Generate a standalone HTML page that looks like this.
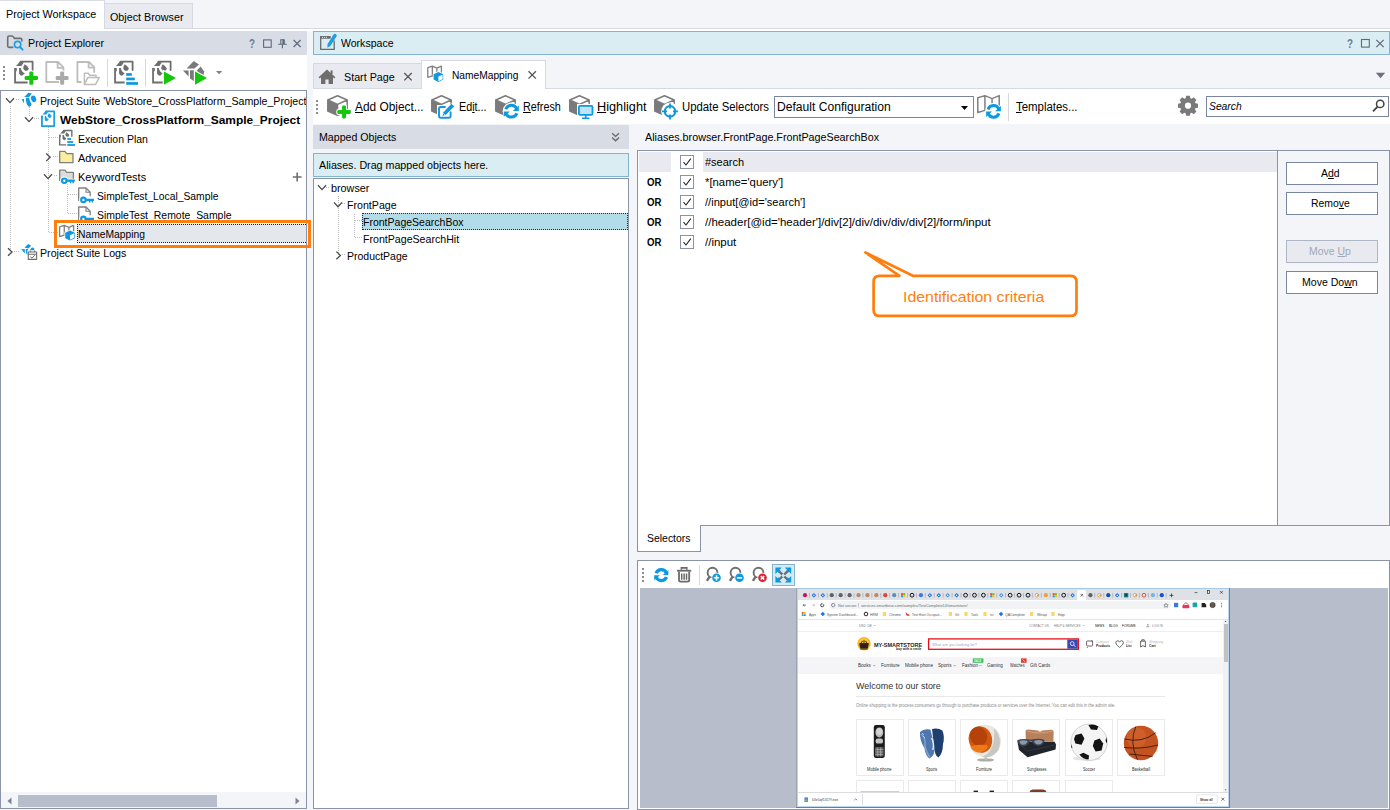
<!DOCTYPE html>
<html><head><meta charset="utf-8"><title>TestComplete - NameMapping</title>
<style>
html,body{margin:0;padding:0}
body{width:1390px;height:810px;overflow:hidden;position:relative;background:#F4F5F8;font-family:"Liberation Sans",sans-serif;color:#000}
.a{position:absolute;display:block}
.t{position:absolute;white-space:pre;line-height:1;transform-origin:0 0;font-family:"Liberation Sans",sans-serif}
u{text-decoration:underline;text-underline-offset:1px}
</style></head><body>
<div class="a " style="left:0px;top:0px;width:104px;height:31px;background:#fff;"></div>
<div class="a " style="left:0px;top:0px;width:105px;height:1px;background:#D9DCE3;"></div>
<div class="a " style="left:104px;top:3px;width:89px;height:26px;background:#E8EAEF;box-shadow:inset 0 0 0 1px #D5D9E1;"></div>
<div class="a " style="left:104px;top:1px;width:1px;height:28px;background:#D5D9E1;"></div>
<div class="a " style="left:104px;top:28px;width:1286px;height:1px;background:#D5D9E1;"></div>
<div class="a " style="left:104px;top:29px;width:1286px;height:2px;background:#fff;"></div>
<span class="t" style="left:6.0px;top:9px;font-size:11px;transform:scaleX(0.9804);">Project Workspace</span>
<span class="t" style="left:110.0px;top:12px;font-size:11px;transform:scaleX(0.9776);">Object Browser</span>
<div class="a " style="left:0px;top:31px;width:307px;height:24px;background:#D8DCE5;"></div>
<span class="t" style="left:28.4px;top:38px;font-size:11px;transform:scaleX(0.9726);">Project Explorer</span>
<div class="a " style="left:0px;top:55px;width:307px;height:35px;background:#fff;"></div>
<div class="a " style="left:0px;top:90px;width:307px;height:719px;background:#fff;box-shadow:inset 0 0 0 1px #8A93A8;"></div>
<div class="a " style="left:1px;top:792px;width:305px;height:16px;background:#F4F5F8;"></div>
<div class="a " style="left:18px;top:795px;width:199px;height:12px;background:#B7BDCB;"></div>
<svg class="a" style="left:7px;top:797px" width="5" height="8" viewBox="0 0 5 8"><path d="M4.5 0.5 L0.5 4 L4.5 7.5Z" fill="#7A849A"/></svg>
<svg class="a" style="left:295px;top:797px" width="5" height="8" viewBox="0 0 5 8"><path d="M0.5 0.5 L4.5 4 L0.5 7.5Z" fill="#7A849A"/></svg>
<div class="a" style="left:10px;top:106px;width:1px;height:146px;background:repeating-linear-gradient(to bottom,#BDBDBD 0 1px,transparent 1px 2px)"></div>
<div class="a" style="left:16px;top:99px;width:4px;height:1px;background:repeating-linear-gradient(to right,#BDBDBD 0 1px,transparent 1px 2px)"></div>
<div class="a" style="left:14px;top:251px;width:6px;height:1px;background:repeating-linear-gradient(to right,#BDBDBD 0 1px,transparent 1px 2px)"></div>
<div class="a" style="left:29px;top:107px;width:1px;height:9px;background:repeating-linear-gradient(to bottom,#BDBDBD 0 1px,transparent 1px 2px)"></div>
<div class="a" style="left:34px;top:118px;width:6px;height:1px;background:repeating-linear-gradient(to right,#BDBDBD 0 1px,transparent 1px 2px)"></div>
<div class="a" style="left:48px;top:127px;width:1px;height:106px;background:repeating-linear-gradient(to bottom,#BDBDBD 0 1px,transparent 1px 2px)"></div>
<div class="a" style="left:49px;top:137px;width:9px;height:1px;background:repeating-linear-gradient(to right,#BDBDBD 0 1px,transparent 1px 2px)"></div>
<div class="a" style="left:53px;top:156px;width:5px;height:1px;background:repeating-linear-gradient(to right,#BDBDBD 0 1px,transparent 1px 2px)"></div>
<div class="a" style="left:54px;top:175px;width:4px;height:1px;background:repeating-linear-gradient(to right,#BDBDBD 0 1px,transparent 1px 2px)"></div>
<div class="a" style="left:49px;top:232px;width:9px;height:1px;background:repeating-linear-gradient(to right,#BDBDBD 0 1px,transparent 1px 2px)"></div>
<div class="a" style="left:67px;top:184px;width:1px;height:30px;background:repeating-linear-gradient(to bottom,#BDBDBD 0 1px,transparent 1px 2px)"></div>
<div class="a" style="left:68px;top:194px;width:9px;height:1px;background:repeating-linear-gradient(to right,#BDBDBD 0 1px,transparent 1px 2px)"></div>
<div class="a" style="left:68px;top:213px;width:9px;height:1px;background:repeating-linear-gradient(to right,#BDBDBD 0 1px,transparent 1px 2px)"></div>
<div class="a " style="left:77px;top:224px;width:229px;height:19px;background:#E4E7EC;border:1px dotted #222;border-right:0;box-sizing:border-box;"></div>
<div class="a " style="left:54px;top:220px;width:257px;height:28px;border:3px solid #FF7F0E;box-sizing:border-box;"></div>
<span class="t" style="left:39.8px;top:96px;font-size:11px;transform:scaleX(0.9660);">Project Suite 'WebStore_CrossPlatform_Sample_Project</span>
<span class="t" style="left:59.9px;top:115px;font-size:11px;font-weight:bold;transform:scaleX(1.0834);">WebStore_CrossPlatform_Sample_Project</span>
<span class="t" style="left:77.8px;top:134px;font-size:11px;transform:scaleX(0.9526);">Execution Plan</span>
<span class="t" style="left:78.3px;top:153px;font-size:11px;transform:scaleX(0.9893);">Advanced</span>
<span class="t" style="left:77.8px;top:172px;font-size:11px;transform:scaleX(0.9946);">KeywordTests</span>
<span class="t" style="left:97.3px;top:191px;font-size:11px;transform:scaleX(0.9366);">SimpleTest_Local_Sample</span>
<span class="t" style="left:97.3px;top:210px;font-size:11px;transform:scaleX(0.9483);">SimpleTest_Remote_Sample</span>
<span class="t" style="left:77.8px;top:229px;font-size:11px;transform:scaleX(0.9352);">NameMapping</span>
<span class="t" style="left:39.8px;top:248px;font-size:11px;transform:scaleX(0.9667);">Project Suite Logs</span>
<div class="a " style="left:306px;top:91px;width:1px;height:19px;background:#8A93A8;"></div>
<div class="a " style="left:307px;top:91px;width:6px;height:19px;background:#F4F5F8;"></div>
<div class="a " style="left:313px;top:31px;width:1077px;height:24px;background:#DAEDF2;box-shadow:inset 0 0 0 1px #82B4D0;"></div>
<span class="t" style="left:341.2px;top:38px;font-size:11px;transform:scaleX(0.9578);">Workspace</span>
<div class="a " style="left:313px;top:63px;width:109px;height:26px;background:#E8EAEF;box-shadow:inset 0 0 0 1px #D5D9E1;"></div>
<div class="a " style="left:421px;top:60px;width:125px;height:30px;background:#fff;box-shadow:inset 0 0 0 1px #D5D9E1;"></div>
<div class="a " style="left:546px;top:88px;width:844px;height:1px;background:#D5D9E1;"></div>
<div class="a " style="left:313px;top:89px;width:1077px;height:35px;background:#fff;"></div>
<div class="a " style="left:422px;top:89px;width:123px;height:1px;background:#fff;"></div>
<span class="t" style="left:343.7px;top:72px;font-size:11px;transform:scaleX(0.9755);">Start Page</span>
<span class="t" style="left:452.1px;top:70px;font-size:11px;transform:scaleX(0.9282);">NameMapping</span>
<span class="t" style="left:354.6px;top:101px;font-size:12px;transform:scaleX(0.9890);"><u>A</u>dd Object...</span>
<span class="t" style="left:459.1px;top:101px;font-size:12px;transform:scaleX(0.8996);">Ed<u>i</u>t...</span>
<span class="t" style="left:522.9px;top:101px;font-size:12px;transform:scaleX(0.8997);"><u>R</u>efresh</span>
<span class="t" style="left:596.7px;top:101px;font-size:12px;transform:scaleX(1.0602);"><u>H</u>ighlight</span>
<span class="t" style="left:682.1px;top:101px;font-size:12px;transform:scaleX(0.9452);">Update Selectors</span>
<div class="a " style="left:774px;top:96px;width:200px;height:22px;background:#fff;box-shadow:inset 0 0 0 1px #7A869E;"></div>
<span class="t" style="left:777.3px;top:101px;font-size:12px;transform:scaleX(1.0086);">Default Configuration</span>
<svg class="a" style="left:961px;top:106px" width="7" height="4" viewBox="0 0 7 4"><path d="M0 0H7L3.5 4Z" fill="#000"/></svg>
<div class="a " style="left:1008px;top:93px;width:1px;height:28px;background:#D8D8D8;"></div>
<span class="t" style="left:1015.5px;top:101px;font-size:12px;transform:scaleX(0.9507);"><u>T</u>emplates...</span>
<div class="a " style="left:1206px;top:96px;width:183px;height:21px;background:#fff;box-shadow:inset 0 0 0 1px #7A869E;"></div>
<span class="t" style="left:1209.3px;top:101px;font-size:11px;font-style:italic;transform:scaleX(0.9383);">Search</span>
<div class="a " style="left:313px;top:125px;width:316px;height:24px;background:#D8DCE5;"></div>
<span class="t" style="left:319.3px;top:132px;font-size:11px;transform:scaleX(0.9639);">Mapped Objects</span>
<div class="a " style="left:313px;top:153px;width:316px;height:24px;background:#DAEDF2;box-shadow:inset 0 0 0 1px #82B4D0;"></div>
<span class="t" style="left:319.3px;top:160px;font-size:11px;transform:scaleX(0.9716);">Aliases. Drag mapped objects here.</span>
<div class="a " style="left:313px;top:178px;width:316px;height:631px;background:#fff;box-shadow:inset 0 0 0 1px #8A93A8;"></div>
<div class="a " style="left:362px;top:213px;width:266px;height:17px;background:#B2DDE8;outline:1px dotted #4A1F1A;outline-offset:-1px;"></div>
<div class="a" style="left:338px;top:196px;width:1px;height:59px;background:repeating-linear-gradient(to bottom,#BDBDBD 0 1px,transparent 1px 2px)"></div>
<div class="a" style="left:326px;top:187px;width:4px;height:1px;background:repeating-linear-gradient(to right,#BDBDBD 0 1px,transparent 1px 2px)"></div>
<div class="a" style="left:342px;top:203px;width:4px;height:1px;background:repeating-linear-gradient(to right,#BDBDBD 0 1px,transparent 1px 2px)"></div>
<div class="a" style="left:342px;top:254px;width:4px;height:1px;background:repeating-linear-gradient(to right,#BDBDBD 0 1px,transparent 1px 2px)"></div>
<div class="a" style="left:354px;top:214px;width:1px;height:24px;background:repeating-linear-gradient(to bottom,#BDBDBD 0 1px,transparent 1px 2px)"></div>
<div class="a" style="left:355px;top:220px;width:7px;height:1px;background:repeating-linear-gradient(to right,#BDBDBD 0 1px,transparent 1px 2px)"></div>
<div class="a" style="left:355px;top:237px;width:7px;height:1px;background:repeating-linear-gradient(to right,#BDBDBD 0 1px,transparent 1px 2px)"></div>
<span class="t" style="left:330.8px;top:183px;font-size:11px;transform:scaleX(0.9816);">browser</span>
<span class="t" style="left:346.9px;top:200px;font-size:11px;transform:scaleX(0.9657);">FrontPage</span>
<span class="t" style="left:363.0px;top:217px;font-size:11px;transform:scaleX(0.9556);">FrontPageSearchBox</span>
<span class="t" style="left:363.0px;top:234px;font-size:11px;transform:scaleX(0.9643);">FrontPageSearchHit</span>
<span class="t" style="left:346.9px;top:251px;font-size:11px;transform:scaleX(0.9529);">ProductPage</span>
<span class="t" style="left:644.9px;top:132px;font-size:11px;transform:scaleX(0.9764);">Aliases.browser.FrontPage.FrontPageSearchBox</span>
<div class="a " style="left:637px;top:150px;width:753px;height:376px;background:#fff;box-shadow:inset 0 0 0 1px #8A93A8;"></div>
<div class="a " style="left:1278px;top:151px;width:111px;height:374px;background:#F4F5F8;"></div>
<div class="a " style="left:1277px;top:151px;width:1px;height:374px;background:#8A93A8;"></div>
<div class="a " style="left:639px;top:152px;width:32px;height:20px;background:#E8EAEF;"></div>
<div class="a " style="left:703px;top:152px;width:574px;height:20px;background:#E8EAEF;"></div>
<div class="a " style="left:680px;top:155px;width:14px;height:14px;background:#fff;box-shadow:inset 0 0 0 1px #8A93A8;"></div>
<svg class="a" style="left:682px;top:157px" width="10" height="10" viewBox="0 0 10 10"><path d="M1.5 5.2 L4 8 L8.8 1.6" fill="none" stroke="#222" stroke-width="1.1"/></svg>
<span class="t" style="left:704.9px;top:157px;font-size:11px;">#search</span>
<div class="a " style="left:680px;top:175px;width:14px;height:14px;background:#fff;box-shadow:inset 0 0 0 1px #8A93A8;"></div>
<svg class="a" style="left:682px;top:177px" width="10" height="10" viewBox="0 0 10 10"><path d="M1.5 5.2 L4 8 L8.8 1.6" fill="none" stroke="#222" stroke-width="1.1"/></svg>
<span class="t" style="left:704.9px;top:177px;font-size:11px;transform:scaleX(1.0283);">*[name='query']</span>
<span class="t" style="left:646.9px;top:177px;font-size:11px;font-weight:bold;transform:scaleX(0.8727);">OR</span>
<div class="a " style="left:680px;top:195px;width:14px;height:14px;background:#fff;box-shadow:inset 0 0 0 1px #8A93A8;"></div>
<svg class="a" style="left:682px;top:197px" width="10" height="10" viewBox="0 0 10 10"><path d="M1.5 5.2 L4 8 L8.8 1.6" fill="none" stroke="#222" stroke-width="1.1"/></svg>
<span class="t" style="left:704.9px;top:197px;font-size:11px;transform:scaleX(1.0086);">//input[@id='search']</span>
<span class="t" style="left:646.9px;top:197px;font-size:11px;font-weight:bold;transform:scaleX(0.8727);">OR</span>
<div class="a " style="left:680px;top:215px;width:14px;height:14px;background:#fff;box-shadow:inset 0 0 0 1px #8A93A8;"></div>
<svg class="a" style="left:682px;top:217px" width="10" height="10" viewBox="0 0 10 10"><path d="M1.5 5.2 L4 8 L8.8 1.6" fill="none" stroke="#222" stroke-width="1.1"/></svg>
<span class="t" style="left:704.9px;top:217px;font-size:11px;transform:scaleX(1.0459);">//header[@id='header']/div[2]/div/div/div/div[2]/form/input</span>
<span class="t" style="left:646.9px;top:217px;font-size:11px;font-weight:bold;transform:scaleX(0.8727);">OR</span>
<div class="a " style="left:680px;top:235px;width:14px;height:14px;background:#fff;box-shadow:inset 0 0 0 1px #8A93A8;"></div>
<svg class="a" style="left:682px;top:237px" width="10" height="10" viewBox="0 0 10 10"><path d="M1.5 5.2 L4 8 L8.8 1.6" fill="none" stroke="#222" stroke-width="1.1"/></svg>
<span class="t" style="left:704.9px;top:237px;font-size:11px;transform:scaleX(1.0446);">//input</span>
<span class="t" style="left:646.9px;top:237px;font-size:11px;font-weight:bold;transform:scaleX(0.8727);">OR</span>
<div class="a " style="left:1286px;top:162px;width:92px;height:23px;background:#fff;box-shadow:inset 0 0 0 1px #7A869E;"></div>
<span class="t" style="left:1321.3px;top:168px;font-size:11px;transform:scaleX(0.9504);">A<u>d</u>d</span>
<div class="a " style="left:1286px;top:192px;width:92px;height:23px;background:#fff;box-shadow:inset 0 0 0 1px #7A869E;"></div>
<span class="t" style="left:1310.9px;top:198px;font-size:11px;transform:scaleX(0.9498);">Remo<u>v</u>e</span>
<div class="a " style="left:1286px;top:240px;width:92px;height:23px;background:#E8EAEF;box-shadow:inset 0 0 0 1px #AEB5C4;"></div>
<span class="t" style="left:1308.9px;top:246px;font-size:11px;color:#A0A8B8;transform:scaleX(0.9520);">Move <u>U</u>p</span>
<div class="a " style="left:1286px;top:271px;width:92px;height:23px;background:#fff;box-shadow:inset 0 0 0 1px #7A869E;"></div>
<span class="t" style="left:1302.0px;top:277px;font-size:11px;transform:scaleX(0.9591);">Move Do<u>w</u>n</span>
<svg class="a" style="left:860px;top:248px" width="222" height="74" viewBox="0 0 222 74"><path d="M13.6 33.8 Q13.6 27.8 19.6 27.8 H39.5 L5.4 4.5 L52.9 27.8 H210.5 Q216.5 27.8 216.5 33.8 V61.9 Q216.5 67.9 210.5 67.9 H19.6 Q13.6 67.9 13.6 61.9Z" fill="#fff" stroke="#FF7F0E" stroke-width="2.7" stroke-linejoin="round"/></svg>
<span class="t" style="left:903.1px;top:290px;font-size:14.5px;color:#FF7F0E;transform:scaleX(1.0951);">Identification criteria</span>
<div class="a " style="left:637px;top:525px;width:64px;height:27px;background:#fff;box-shadow:inset 0 0 0 1px #8A93A8;"></div>
<div class="a " style="left:638px;top:524px;width:62px;height:2px;background:#fff;"></div>
<span class="t" style="left:647.0px;top:533px;font-size:11px;transform:scaleX(0.9487);">Selectors</span>
<div class="a " style="left:637px;top:560px;width:753px;height:250px;background:#fff;box-shadow:inset 0 0 0 1px #8A93A8;"></div>
<div class="a " style="left:640px;top:588px;width:748px;height:220px;background:#B7BDCB;"></div>
<svg class="a" style="left:5px;top:33px" width="20" height="19" viewBox="5 33 20 19"><path d="M13.4 47.4 H9 Q7.7 47.4 7.7 46.1 V37.4 Q7.7 36 9 36 H12 Q13 36 13.6 37.2 L14.3 38.4 H20.4 Q21.9 38.4 21.9 39.9 V41.6" fill="none" stroke="#6E6E6E" stroke-width="1.6"/><circle cx="17.6" cy="44.6" r="3.2" fill="#D8DCE5" stroke="#1C9FE4" stroke-width="1.6"/><path d="M20 47 L22.6 49.6" stroke="#1C9FE4" stroke-width="2" stroke-linecap="round"/></svg>
<span class="t" style="left:249.1px;top:38px;font-size:12px;font-weight:bold;color:#727A8B;transform:scaleX(0.8186);">?</span>
<svg class="a" style="left:260px;top:36px" width="45" height="16" viewBox="260 36 45 16"><rect x="263.6" y="39.9" width="7.6" height="7.4" fill="none" stroke="#5E687B" stroke-width="1.1"/><rect x="282.4" y="39.7" width="2.2" height="4.4" fill="#5E687B"/><path d="M280.2 39.7 H284.6 M280.8 39.7 V44.2 M284 39.7 V44.2 M278.2 44.3 H286.8 M282.4 44.3 V48.2" fill="none" stroke="#5E687B" stroke-width="1.1"/><path d="M293.6 40.0L300.6 47.0M300.6 40.0L293.6 47.0" stroke="#5E687B" stroke-width="1.2" fill="none"/></svg>
<svg class="a" style="left:318px;top:32px" width="20" height="20" viewBox="318 32 20 20"><path d="M334.2 40.6 V49.3 H320.7 V36.8 H330.6" fill="none" stroke="#6A6A6A" stroke-width="1.3"/><rect x="320.1" y="36.1" width="10.5" height="2.6" fill="#6A6A6A"/><circle cx="322.4" cy="37.4" r=".55" fill="#DCEAEF"/><circle cx="324.4" cy="37.4" r=".55" fill="#DCEAEF"/><circle cx="326.4" cy="37.4" r=".55" fill="#DCEAEF"/><path d="M327.3 47.7 L327.6 44.1 L333.9 34.1 Q335.7 32.9 336.9 35.7 L330.4 45.9Z" fill="#1C9FE4"/></svg>
<span class="t" style="left:1346.7px;top:38px;font-size:12px;font-weight:bold;color:#727A8B;transform:scaleX(0.8186);">?</span>
<svg class="a" style="left:1358px;top:36px" width="30" height="16" viewBox="1358 36 30 16"><rect x="1361.5" y="39.5" width="7.8" height="7.6" fill="none" stroke="#5E687B" stroke-width="1.1"/><path d="M1376.3 39.8L1383.7 47.2M1383.7 39.8L1376.3 47.2" stroke="#5E687B" stroke-width="1.2" fill="none"/></svg>
<svg class="a" style="left:1374px;top:71px" width="13" height="9" viewBox="1374 71 13 9"><path d="M1375.8 72.8 H1385.2 L1380.5 78.2Z" fill="#6A7285"/></svg>
<div class="a " style="left:3px;top:66px;width:2px;height:2px;background:#8C8C8C;"></div>
<div class="a " style="left:3px;top:70px;width:2px;height:2px;background:#8C8C8C;"></div>
<div class="a " style="left:3px;top:74px;width:2px;height:2px;background:#8C8C8C;"></div>
<div class="a " style="left:3px;top:78px;width:2px;height:2px;background:#8C8C8C;"></div>
<svg class="a" style="left:12px;top:58px" width="90" height="30" viewBox="12 58 90 30"><g transform="translate(14 61) scale(1)"><path d="M1.05 6.9 V21.5 H18.6 V0.65 H6.6 L2 5Z" fill="#fff"/><path d="M6.6 0.65 H18.6 V9" fill="none" stroke="#6E6E6E" stroke-width="1.8" stroke-linecap="round" stroke-linejoin="round"/><path d="M1.05 6.9 V21.5 H13.6" fill="none" stroke="#6E6E6E" stroke-width="1.8" stroke-linejoin="miter"/><path d="M2 4.9 L6.3 0.1 L9.8 1.5 L7.4 4.9Z" fill="#6E6E6E"/><path d="M0.15 6.9 H2.8 V10.2 H1.9 V7.9 H0.15Z" fill="#6E6E6E"/><path d="M10.7 3.2 Q14.4 5.4 14.9 7.6 Q14.4 9.8 12 9.9 Q9.6 9.6 9.2 7.6 Q9.2 5.2 10.7 3.2Z" fill="#6E6E6E"/><path d="M5.1 7.1 H6.9 Q7.3 11 10.9 12.3 L8.1 14.7 Q6.2 14.6 5.1 12.8Z" fill="#6E6E6E"/></g><rect x="23.6" y="75.1" width="15.399999999999999" height="6" rx="2" fill="#fff"/><rect x="28.3" y="70.4" width="6" height="15.399999999999991" rx="2" fill="#fff"/><rect x="24.6" y="76.1" width="13.399999999999999" height="4" rx="1.3" fill="#16C60C"/><rect x="29.3" y="71.4" width="4" height="13.399999999999991" rx="1.3" fill="#16C60C"/><path d="M46.3 62 H58 L63.4 67.4 V82 H46.3Z M57.6 62.3 V67.8 H63" fill="#fff" stroke="#BDBDBD" stroke-width="1.8" stroke-linejoin="round"/><rect x="54.7" y="75.1" width="14.899999999999991" height="6" rx="2" fill="#fff"/><rect x="59.15" y="70.4" width="6" height="15.399999999999991" rx="2" fill="#fff"/><rect x="55.7" y="76.1" width="12.899999999999991" height="4" rx="1.3" fill="#AAAAAA"/><rect x="60.15" y="71.4" width="4" height="13.399999999999991" rx="1.3" fill="#AAAAAA"/><path d="M77.4 62 H89 L94.2 67.2 V82 H77.4Z M88.6 62.3 V67.6 H93.8" fill="#fff" stroke="#BDBDBD" stroke-width="1.8" stroke-linejoin="round"/><path d="M83.2 86 V72.4 H88.4 L90 74.4 H96.6 V77" fill="#fff" stroke="#fff" stroke-width="3.4"/><path d="M84.4 84.4 V73.2 H88.2 L89.8 75.2 H96 V77.6 M84.4 84.4 L87.8 77.6 H99.2 L95.6 84.4Z" fill="#fff" stroke="#BDBDBD" stroke-width="1.5" stroke-linejoin="round"/></svg>
<div class="a " style="left:107px;top:59px;width:1px;height:28px;background:#D8D8D8;"></div>
<svg class="a" style="left:112px;top:58px" width="30" height="30" viewBox="112 58 30 30"><g transform="translate(114 61) scale(1)"><path d="M1.05 6.9 V21.5 H18.6 V0.65 H6.6 L2 5Z" fill="#fff"/><path d="M6.6 0.65 H18.6 V9" fill="none" stroke="#6E6E6E" stroke-width="1.8" stroke-linecap="round" stroke-linejoin="round"/><path d="M1.05 6.9 V21.5 H13.6" fill="none" stroke="#6E6E6E" stroke-width="1.8" stroke-linejoin="miter"/><path d="M2 4.9 L6.3 0.1 L9.8 1.5 L7.4 4.9Z" fill="#6E6E6E"/><path d="M0.15 6.9 H2.8 V10.2 H1.9 V7.9 H0.15Z" fill="#6E6E6E"/><path d="M10.7 3.2 Q14.4 5.4 14.9 7.6 Q14.4 9.8 12 9.9 Q9.6 9.6 9.2 7.6 Q9.2 5.2 10.7 3.2Z" fill="#6E6E6E"/><path d="M5.1 7.1 H6.9 Q7.3 11 10.9 12.3 L8.1 14.7 Q6.2 14.6 5.1 12.8Z" fill="#6E6E6E"/></g><rect x="124.6" y="71.6" width="15" height="14.6" fill="#fff"/><rect x="126.2" y="73.1" width="5.6" height="2.7" fill="#0E98E0"/><rect x="126.2" y="77.6" width="8.6" height="2.7" fill="#0E98E0"/><rect x="126.2" y="82.1" width="11.8" height="2.7" fill="#0E98E0"/></svg>
<div class="a " style="left:145px;top:59px;width:1px;height:28px;background:#D8D8D8;"></div>
<svg class="a" style="left:150px;top:58px" width="76" height="30" viewBox="150 58 76 30"><g transform="translate(152 61) scale(1)"><path d="M1.05 6.9 V21.5 H18.6 V0.65 H6.6 L2 5Z" fill="#fff"/><path d="M6.6 0.65 H18.6 V9" fill="none" stroke="#6E6E6E" stroke-width="1.8" stroke-linecap="round" stroke-linejoin="round"/><path d="M1.05 6.9 V21.5 H13.6" fill="none" stroke="#6E6E6E" stroke-width="1.8" stroke-linejoin="miter"/><path d="M2 4.9 L6.3 0.1 L9.8 1.5 L7.4 4.9Z" fill="#6E6E6E"/><path d="M0.15 6.9 H2.8 V10.2 H1.9 V7.9 H0.15Z" fill="#6E6E6E"/><path d="M10.7 3.2 Q14.4 5.4 14.9 7.6 Q14.4 9.8 12 9.9 Q9.6 9.6 9.2 7.6 Q9.2 5.2 10.7 3.2Z" fill="#6E6E6E"/><path d="M5.1 7.1 H6.9 Q7.3 11 10.9 12.3 L8.1 14.7 Q6.2 14.6 5.1 12.8Z" fill="#6E6E6E"/></g><path d="M162.70000000000002 69.4 L178 78.1 L162.70000000000002 86.8Z" fill="#fff"/><path d="M163.9 71.4 L176 78.1 L163.9 84.8Z" fill="#16C60C"/><path d="M186.6 68.6 L193.8 61 L199 64.6 L194.4 68.6Z" fill="#7A7A7A"/><path d="M183 70.6 L188.6 70.6 L188.6 76.6Z" fill="#7A7A7A"/><path d="M196.6 70.8 L200.6 66.4 L204.2 71.6 L203.4 75.4 L199 73.2Z" fill="#7A7A7A"/><path d="M190 70.2 L195.2 70.2 L195.2 82 L190 78.6Z" fill="#7A7A7A"/><path d="M193.8 69.4 L209 78.1 L193.8 86.8Z" fill="#fff"/><path d="M195 71.4 L207 78.1 L195 84.8Z" fill="#16C60C"/><path d="M216 71 H222.2 L219.1 74.2Z" fill="#808080"/></svg>
<svg class="a" style="left:2px;top:91px" width="78" height="172" viewBox="2 91 78 172"><path d="M6 98.2 L10 102.60000000000001 L14 98.2" fill="none" stroke="#4A4A4A" stroke-width="1.3"/><path d="M25 117.2 L29 121.60000000000001 L33 117.2" fill="none" stroke="#4A4A4A" stroke-width="1.3"/><path d="M46.2 153.5 L50.2 157.3 L46.2 161.10000000000002" fill="none" stroke="#4A4A4A" stroke-width="1.3"/><path d="M44 174.20000000000002 L48 178.6 L52 174.20000000000002" fill="none" stroke="#4A4A4A" stroke-width="1.3"/><path d="M8 248.2 L12 252 L8 255.8" fill="none" stroke="#4A4A4A" stroke-width="1.3"/><path d="M24.3 97 L28.4 92.7 L31.8 93.6 L29.1 97Z" fill="#0E98E0"/><path d="M21.6 99.3 L24 98.9 L24 103.2Z" fill="#0E98E0"/><ellipse cx="33.6" cy="98.9" rx="2.5" ry="3.3" transform="rotate(-20 33.6 98.9)" fill="#0E98E0"/><path d="M25.8 97.8 H29.2 Q29.2 101 31.7 104.2 Q31 106 29.2 107 Q26 105.6 25.8 97.8Z" fill="#0E98E0"/><g transform="translate(41.2 111) scale(0.7)"><path d="M1.05 6.9 V21.5 H18.6 V0.65 H6.6 L2 5Z" fill="#fff"/><path d="M6.6 0.65 H18.6 V21.5" fill="none" stroke="#1C9FE4" stroke-width="2.6" stroke-linecap="round" stroke-linejoin="round"/><path d="M1.05 6.9 V21.5 H18.6" fill="none" stroke="#1C9FE4" stroke-width="2.6" stroke-linejoin="miter"/><path d="M2 4.9 L6.3 0.1 L9.8 1.5 L7.4 4.9Z" fill="#1C9FE4"/><path d="M0.15 6.9 H2.8 V10.2 H1.9 V7.9 H0.15Z" fill="#1C9FE4"/><path d="M10.7 3.2 Q14.4 5.4 14.9 7.6 Q14.4 9.8 12 9.9 Q9.6 9.6 9.2 7.6 Q9.2 5.2 10.7 3.2Z" fill="#1C9FE4"/><path d="M5.1 7.1 H6.9 Q7.3 11 10.9 12.3 L8.1 14.7 Q6.2 14.6 5.1 12.8Z" fill="#1C9FE4"/></g><g transform="translate(59 130) scale(0.69)"><path d="M1.05 6.9 V21.5 H18.6 V0.65 H6.6 L2 5Z" fill="#fff"/><path d="M6.6 0.65 H18.6 V9" fill="none" stroke="#6E6E6E" stroke-width="2.0" stroke-linecap="round" stroke-linejoin="round"/><path d="M1.05 6.9 V21.5 H13.6" fill="none" stroke="#6E6E6E" stroke-width="2.0" stroke-linejoin="miter"/><path d="M2 4.9 L6.3 0.1 L9.8 1.5 L7.4 4.9Z" fill="#6E6E6E"/><path d="M0.15 6.9 H2.8 V10.2 H1.9 V7.9 H0.15Z" fill="#6E6E6E"/><path d="M10.7 3.2 Q14.4 5.4 14.9 7.6 Q14.4 9.8 12 9.9 Q9.6 9.6 9.2 7.6 Q9.2 5.2 10.7 3.2Z" fill="#6E6E6E"/><path d="M5.1 7.1 H6.9 Q7.3 11 10.9 12.3 L8.1 14.7 Q6.2 14.6 5.1 12.8Z" fill="#6E6E6E"/></g><rect x="66.2" y="137.2" width="10" height="9.6" fill="#fff"/><rect x="67.3" y="138.1" width="3.7" height="1.8" fill="#0E98E0"/><rect x="67.3" y="141.1" width="5.9" height="1.8" fill="#0E98E0"/><rect x="67.3" y="144.1" width="7.7" height="1.8" fill="#0E98E0"/><path d="M59.7 162.7 V151.4 H65 L66.6 153.6 H73 V162.7Z" fill="#FBEE9C" stroke="#808080" stroke-width="1.3" stroke-linejoin="round"/><path d="M59.7 180.6 V170.2 H65 L66.6 172.4 H73.4 V180.6Z" fill="#DCDCDC" stroke="#808080" stroke-width="1.3" stroke-linejoin="round"/><g stroke="#fff" fill="#fff" stroke-width="1.6" stroke-linejoin="round"><circle cx="64.3" cy="180.7" r="3.3"/><path d="M66.4 179.5 H74.8 V181.8 H73.9 V183.2 H72.4 V181.8 H71.3 V183.2 H69.8 V181.8 H66.4Z"/></g><circle cx="64.3" cy="180.7" r="2.25" fill="#fff" stroke="#0E98E0" stroke-width="2.1"/><path d="M66.4 179.5 H74.8 V181.8 H73.9 V183.2 H72.4 V181.8 H71.3 V183.2 H69.8 V181.8 H66.4Z" fill="#0E98E0"/><path d="M59.6 226.792 L64.26666666666667 225.4 L68.93333333333334 227.372 L73.6 225.4 V235.144 L68.93333333333334 237.0 L64.26666666666667 235.144 L59.6 236.536Z M64.26666666666667 225.4 V235.144 M68.93333333333334 227.372 V237.0" fill="#fff" stroke="#808080" stroke-width="1.3" stroke-linejoin="round"/><g transform="translate(65.2 230.6) scale(1.0)"><path d="M4.8 0 L9.6 2.2 V7.6 L4.8 10 L0 7.6 V2.2Z" fill="#fff" stroke="#fff" stroke-width="1.6"/><path d="M4.8 0 L9.6 2.2 V7.6 L4.8 10 L0 7.6 V2.2Z" fill="#0E98E0"/><path d="M4.8 4.6 L9 2.7 V7.2 L4.8 9.2Z" fill="#fff"/><path d="M1 2.4 L4.8 0.8 L8.6 2.4 L4.8 4Z" fill="#BFE3F7" opacity=".0"/></g><path d="M24.6 247.6 L28.2 244 L31.2 245.8 L28.2 248.6Z" fill="#0E98E0"/><path d="M21.3 249.2 L24.8 249 L24.8 253.4Z" fill="#0E98E0"/><path d="M30.4 249.2 Q32.4 246 34.2 248.6 L34.4 251 H30.6Z" fill="#0E98E0"/><path d="M25.8 249 H28.2 V256 Q25.4 254 25.8 249Z" fill="#0E98E0"/><rect x="27.3" y="250.2" width="10.4" height="10" fill="#fff"/><path d="M28.3 252 H36.6 V259.4 H28.3Z M28.3 254.2 H36.6 M30.4 250.6 V252.6 M34.5 250.6 V252.6" fill="#fff" stroke="#6E6E6E" stroke-width="1.1"/><path d="M30.4 256.6 L32 258.2 L34.8 255.2" fill="none" stroke="#6E6E6E" stroke-width="1"/></svg>
<svg class="a" style="left:76px;top:186px" width="20" height="36" viewBox="76 186 20 36"><path d="M78.7 200.9 V188.0 H86 L90.2 192.3 V196.3" fill="none" stroke="#808080" stroke-width="1.3" stroke-linejoin="round"/><path d="M86 188.20000000000002 V192.3 H90" fill="none" stroke="#808080" stroke-width="1.1"/><g stroke="#fff" fill="#fff" stroke-width="1.6" stroke-linejoin="round"><circle cx="83.39999999999999" cy="199.89999999999998" r="3.3"/><path d="M85.5 198.7 H93.89999999999999 V201.0 H93.0 V202.39999999999998 H91.5 V201.0 H90.39999999999999 V202.39999999999998 H88.89999999999999 V201.0 H85.5Z"/></g><circle cx="83.39999999999999" cy="199.89999999999998" r="2.25" fill="#fff" stroke="#0E98E0" stroke-width="2.1"/><path d="M85.5 198.7 H93.89999999999999 V201.0 H93.0 V202.39999999999998 H91.5 V201.0 H90.39999999999999 V202.39999999999998 H88.89999999999999 V201.0 H85.5Z" fill="#0E98E0"/><path d="M78.7 219.9 V207.0 H86 L90.2 211.3 V215.3" fill="none" stroke="#808080" stroke-width="1.3" stroke-linejoin="round"/><path d="M86 207.20000000000002 V211.3 H90" fill="none" stroke="#808080" stroke-width="1.1"/><g stroke="#fff" fill="#fff" stroke-width="1.6" stroke-linejoin="round"><circle cx="83.39999999999999" cy="218.89999999999998" r="3.3"/><path d="M85.5 217.7 H93.89999999999999 V220.0 H93.0 V221.39999999999998 H91.5 V220.0 H90.39999999999999 V221.39999999999998 H88.89999999999999 V220.0 H85.5Z"/></g><circle cx="83.39999999999999" cy="218.89999999999998" r="2.25" fill="#fff" stroke="#0E98E0" stroke-width="2.1"/><path d="M85.5 217.7 H93.89999999999999 V220.0 H93.0 V221.39999999999998 H91.5 V220.0 H90.39999999999999 V221.39999999999998 H88.89999999999999 V220.0 H85.5Z" fill="#0E98E0"/></svg>
<div class="a " style="left:54px;top:220px;width:257px;height:28px;border:3px solid #FF7F0E;box-sizing:border-box;"></div>
<svg class="a" style="left:291px;top:171px" width="12" height="12" viewBox="291 171 12 12"><path d="M292.8 177 H301.6 M297.2 172.6 V181.4" stroke="#6E6E6E" stroke-width="1.6"/></svg>
<svg class="a" style="left:317px;top:66px" width="20" height="20" viewBox="317 66 20 20"><path d="M318.6 77.2 L327 69.4 L335.4 77.2 L334.2 78.4 L333 77.3 V84 H328.6 V79.6 H325.4 V84 H321 V77.3 L319.8 78.4Z" fill="#6E6E6E"/><rect x="330.6" y="70.4" width="2" height="3.6" fill="#6E6E6E"/></svg>
<svg class="a" style="left:400px;top:69px" width="16" height="16" viewBox="400 69 16 16"><path d="M404.3 73.0L411.7 80.4M411.7 73.0L404.3 80.4" stroke="#555" stroke-width="1.3" fill="none"/></svg>
<svg class="a" style="left:524px;top:67px" width="16" height="16" viewBox="524 67 16 16"><path d="M528.5 71.2L535.9000000000001 78.60000000000001M535.9000000000001 71.2L528.5 78.60000000000001" stroke="#555" stroke-width="1.3" fill="none"/></svg>
<svg class="a" style="left:425px;top:63px" width="21" height="22" viewBox="425 63 21 22"><path d="M427.8 67.592 L432.33333333333337 66.2 L436.8666666666667 68.172 L441.40000000000003 66.2 V75.944 L436.8666666666667 77.8 L432.33333333333337 75.944 L427.8 77.336Z M432.33333333333337 66.2 V75.944 M436.8666666666667 68.172 V77.8" fill="#fff" stroke="#808080" stroke-width="1.3" stroke-linejoin="round"/><g transform="translate(433.6 72) scale(1.0)"><path d="M4.8 0 L9.6 2.2 V7.6 L4.8 10 L0 7.6 V2.2Z" fill="#fff" stroke="#fff" stroke-width="1.6"/><path d="M4.8 0 L9.6 2.2 V7.6 L4.8 10 L0 7.6 V2.2Z" fill="#0E98E0"/><path d="M4.8 4.6 L9 2.7 V7.2 L4.8 9.2Z" fill="#fff"/><path d="M1 2.4 L4.8 0.8 L8.6 2.4 L4.8 4Z" fill="#BFE3F7" opacity=".0"/></g></svg>
<div class="a " style="left:316px;top:100px;width:2px;height:2px;background:#8C8C8C;"></div>
<div class="a " style="left:316px;top:104px;width:2px;height:2px;background:#8C8C8C;"></div>
<div class="a " style="left:316px;top:108px;width:2px;height:2px;background:#8C8C8C;"></div>
<div class="a " style="left:316px;top:112px;width:2px;height:2px;background:#8C8C8C;"></div>
<svg class="a" style="left:325px;top:93px" width="28" height="28" viewBox="325 93 28 28"><g transform="translate(327 95) scale(1)"><path d="M10.5 0.8 L20.2 5 L20.2 16 L10.5 20.4 L0.8 16 L0.8 5Z" fill="#fff"/><path d="M0.8 5 L10.5 9.4 L10.5 20.4 L0.8 16Z" fill="#7A7A7A"/><path d="M10.5 0.8 L20.2 5 L20.2 16 L10.5 20.4 L0.8 16 L0.8 5Z M0.8 5 L10.5 9.4 L20.2 5 M10.5 9.4 V20.4" fill="none" stroke="#7A7A7A" stroke-width="1.5" stroke-linejoin="round"/></g><rect x="336.3" y="108.95" width="15.5" height="6" rx="2" fill="#fff"/><rect x="341.05" y="104.5" width="6" height="14.900000000000006" rx="2" fill="#fff"/><rect x="337.3" y="109.95" width="13.5" height="4" rx="1.3" fill="#16C60C"/><rect x="342.05" y="105.5" width="4" height="12.900000000000006" rx="1.3" fill="#16C60C"/></svg>
<svg class="a" style="left:429px;top:93px" width="28" height="28" viewBox="429 93 28 28"><g transform="translate(431 95) scale(1)"><path d="M10.5 0.8 L20.2 5 L20.2 16 L10.5 20.4 L0.8 16 L0.8 5Z" fill="#fff"/><path d="M0.8 5 L10.5 9.4 L10.5 20.4 L0.8 16Z" fill="#7A7A7A"/><path d="M10.5 0.8 L20.2 5 L20.2 16 L10.5 20.4 L0.8 16 L0.8 5Z M0.8 5 L10.5 9.4 L20.2 5 M10.5 9.4 V20.4" fill="none" stroke="#7A7A7A" stroke-width="1.5" stroke-linejoin="round"/></g><rect x="437" y="105" width="17" height="15" fill="#fff"/><path d="M450.6 111.6 V116 Q450.6 117.8 448.8 117.8 H440.8 Q439 117.8 439 116 V108.8 Q439 107 440.8 107 H445.6" fill="none" stroke="#0E98E0" stroke-width="1.9"/><path d="M451.4 103.6 L454.6 106.2 L446 115 L442.2 116.2 L443 112.4Z" fill="#0E98E0" stroke="#fff" stroke-width=".6"/><path d="M443.4 113.4 L444.8 114.8" stroke="#fff" stroke-width=".7"/></svg>
<svg class="a" style="left:493px;top:93px" width="28" height="28" viewBox="493 93 28 28"><g transform="translate(495 95) scale(1)"><path d="M10.5 0.8 L20.2 5 L20.2 16 L10.5 20.4 L0.8 16 L0.8 5Z" fill="#fff"/><path d="M0.8 5 L10.5 9.4 L10.5 20.4 L0.8 16Z" fill="#7A7A7A"/><path d="M10.5 0.8 L20.2 5 L20.2 16 L10.5 20.4 L0.8 16 L0.8 5Z M0.8 5 L10.5 9.4 L20.2 5 M10.5 9.4 V20.4" fill="none" stroke="#7A7A7A" stroke-width="1.5" stroke-linejoin="round"/></g><circle cx="511.3" cy="111.2" r="8.6" fill="#fff"/><path d="M505.76 109.18 A5.9 5.9 0 0 1 516.65 108.71" fill="none" stroke="#0E98E0" stroke-width="3.0"/><path d="M516.84 113.22 A5.9 5.9 0 0 1 505.95 113.69" fill="none" stroke="#0E98E0" stroke-width="3.0"/><path d="M518.80 105.59 L518.80 111.00 L512.80 111.00Z" fill="#0E98E0"/><path d="M503.80 116.81 L503.80 111.40 L509.81 111.40Z" fill="#0E98E0"/></svg>
<svg class="a" style="left:567px;top:93px" width="29" height="28" viewBox="567 93 29 28"><g transform="translate(569 95) scale(1)"><path d="M10.5 0.8 L20.2 5 L20.2 16 L10.5 20.4 L0.8 16 L0.8 5Z" fill="#fff"/><path d="M0.8 5 L10.5 9.4 L10.5 20.4 L0.8 16Z" fill="#7A7A7A"/><path d="M10.5 0.8 L20.2 5 L20.2 16 L10.5 20.4 L0.8 16 L0.8 5Z M0.8 5 L10.5 9.4 L20.2 5 M10.5 9.4 V20.4" fill="none" stroke="#7A7A7A" stroke-width="1.5" stroke-linejoin="round"/></g><rect x="577" y="104" width="17.4" height="16" fill="#fff"/><rect x="578.9" y="105.9" width="13.6" height="9" rx="1.2" fill="#BFE3F7" stroke="#0E98E0" stroke-width="1.8"/><path d="M585.7 115 V117.6 M582 118.2 H589.4" stroke="#0E98E0" stroke-width="1.6"/></svg>
<svg class="a" style="left:652px;top:93px" width="29" height="28" viewBox="652 93 29 28"><g transform="translate(654 95) scale(1)"><path d="M10.5 0.8 L20.2 5 L20.2 16 L10.5 20.4 L0.8 16 L0.8 5Z" fill="#fff"/><path d="M0.8 5 L10.5 9.4 L10.5 20.4 L0.8 16Z" fill="#7A7A7A"/><path d="M10.5 0.8 L20.2 5 L20.2 16 L10.5 20.4 L0.8 16 L0.8 5Z M0.8 5 L10.5 9.4 L20.2 5 M10.5 9.4 V20.4" fill="none" stroke="#7A7A7A" stroke-width="1.5" stroke-linejoin="round"/></g><circle cx="670" cy="111.4" r="8.8" fill="#fff"/><circle cx="670" cy="111.4" r="5.2" fill="#fff" stroke="#0E98E0" stroke-width="2.2"/><path d="M670 103.4 V108.4 M670 114.4 V119.4 M662 111.4 H667 M673 111.4 H678" stroke="#0E98E0" stroke-width="1.8"/></svg>
<svg class="a" style="left:975px;top:93px" width="29" height="28" viewBox="975 93 29 28"><path d="M977.8 97.71199999999999 L984.9333333333333 95.6 L992.0666666666666 98.592 L999.1999999999999 95.6 V110.384 L992.0666666666666 113.19999999999999 L984.9333333333333 110.384 L977.8 112.496Z M984.9333333333333 95.6 V110.384 M992.0666666666666 98.592 V113.19999999999999" fill="#fff" stroke="#808080" stroke-width="1.5" stroke-linejoin="round"/><circle cx="993.4" cy="111.4" r="8.4" fill="#fff"/><path d="M988.05 109.42 A5.8 5.8 0 0 1 998.76 108.95" fill="none" stroke="#0E98E0" stroke-width="3.0"/><path d="M998.95 113.38 A5.8 5.8 0 0 1 988.24 113.85" fill="none" stroke="#0E98E0" stroke-width="3.0"/><path d="M1000.90 105.89 L1000.90 111.20 L994.99 111.20Z" fill="#0E98E0"/><path d="M986.10 116.91 L986.10 111.60 L992.01 111.60Z" fill="#0E98E0"/></svg>
<svg class="a" style="left:1176px;top:94px" width="24" height="24" viewBox="1176 94 24 24"><path d="M1198.02 103.77 L1198.02 107.63 L1195.55 108.03 L1194.99 109.39 L1196.44 111.42 L1193.72 114.14 L1191.69 112.69 L1190.33 113.25 L1189.93 115.72 L1186.07 115.72 L1185.67 113.25 L1184.31 112.69 L1182.28 114.14 L1179.56 111.42 L1181.01 109.39 L1180.45 108.03 L1177.98 107.63 L1177.98 103.77 L1180.45 103.37 L1181.01 102.01 L1179.56 99.98 L1182.28 97.26 L1184.31 98.71 L1185.67 98.15 L1186.07 95.68 L1189.93 95.68 L1190.33 98.15 L1191.69 98.71 L1193.72 97.26 L1196.44 99.98 L1194.99 102.01 L1195.55 103.37Z" fill="#7A7A7A"/><circle cx="1188" cy="105.7" r="3.1" fill="#fff"/></svg>
<svg class="a" style="left:1370px;top:98px" width="17" height="16" viewBox="1370 98 17 16"><circle cx="1380.2" cy="103.9" r="3.7" fill="none" stroke="#444" stroke-width="1.5"/><path d="M1377.6 106.7 L1373 111.4" stroke="#444" stroke-width="1.9"/></svg>
<svg class="a" style="left:609px;top:130px" width="12" height="13" viewBox="609 130 12 13"><path d="M612.2 133.2 L615.6 136.4 L619 133.2 M612.2 137.6 L615.6 140.8 L619 137.6" fill="none" stroke="#666" stroke-width="1.35"/></svg>
<svg class="a" style="left:315px;top:180px" width="30" height="82" viewBox="315 180 30 82"><path d="M318 185.20000000000002 L322 189.6 L326 185.20000000000002" fill="none" stroke="#4A4A4A" stroke-width="1.3"/><path d="M334 202.4 L338 206.79999999999998 L342 202.4" fill="none" stroke="#4A4A4A" stroke-width="1.3"/><path d="M336.4 251.6 L340.4 255.4 L336.4 259.2" fill="none" stroke="#4A4A4A" stroke-width="1.3"/></svg>
<div class="a " style="left:642px;top:568px;width:2px;height:2px;background:#8C8C8C;"></div>
<div class="a " style="left:642px;top:572px;width:2px;height:2px;background:#8C8C8C;"></div>
<div class="a " style="left:642px;top:576px;width:2px;height:2px;background:#8C8C8C;"></div>
<div class="a " style="left:642px;top:580px;width:2px;height:2px;background:#8C8C8C;"></div>
<div class="a " style="left:699px;top:565px;width:1px;height:20px;background:#D8D8D8;"></div>
<div class="a " style="left:772px;top:564px;width:23px;height:22px;background:#D5EAF2;box-shadow:inset 0 0 0 1px #82B4D0;"></div>
<svg class="a" style="left:650px;top:563px" width="146" height="24" viewBox="650 563 146 24"><path d="M656.13 573.22 A5.5 5.5 0 0 1 666.28 572.78" fill="none" stroke="#0E98E0" stroke-width="3.3"/><path d="M666.47 576.98 A5.5 5.5 0 0 1 656.32 577.42" fill="none" stroke="#0E98E0" stroke-width="3.3"/><path d="M668.40 569.88 L668.40 574.90 L662.77 574.90Z" fill="#0E98E0"/><path d="M654.20 580.33 L654.20 575.30 L659.82 575.30Z" fill="#0E98E0"/><path d="M677 570.7 H691.2" stroke="#6A6A6A" stroke-width="1.8"/><path d="M681.4 569.8 V567.9 H686.8 V569.8" fill="none" stroke="#6A6A6A" stroke-width="1.6"/><path d="M679 571.4 V580 Q679 581.6 680.6 581.6 H687.6 Q689.2 581.6 689.2 580 V571.4" fill="none" stroke="#6A6A6A" stroke-width="1.8"/><path d="M681.7 573.4 V579.8 M684.1 573.4 V579.8 M686.5 573.4 V579.8" stroke="#6A6A6A" stroke-width="1.5"/><circle cx="712.5" cy="572.7" r="4.9" fill="none" stroke="#6E6E6E" stroke-width="1.9"/><path d="M709.4 576.8 L706.9 580.8" stroke="#6E6E6E" stroke-width="2.4"/><circle cx="716.5" cy="577.8" r="5.1" fill="#fff"/><circle cx="716.5" cy="577.8" r="4.3" fill="#0E98E0"/><path d="M713.9 577.8 H719.1 M716.5 575.1999999999999 V580.4" stroke="#fff" stroke-width="1.5"/><circle cx="735.5" cy="572.7" r="4.9" fill="none" stroke="#6E6E6E" stroke-width="1.9"/><path d="M732.4 576.8 L729.9 580.8" stroke="#6E6E6E" stroke-width="2.4"/><circle cx="739.5" cy="577.8" r="5.1" fill="#fff"/><circle cx="739.5" cy="577.8" r="4.3" fill="#0E98E0"/><path d="M736.9 577.8 H742.1" stroke="#fff" stroke-width="1.6"/><circle cx="758.5" cy="572.7" r="4.9" fill="none" stroke="#6E6E6E" stroke-width="1.9"/><path d="M755.4 576.8 L752.9 580.8" stroke="#6E6E6E" stroke-width="2.4"/><circle cx="762.5" cy="577.8" r="5.1" fill="#fff"/><circle cx="762.5" cy="577.8" r="4.3" fill="#E0202E"/><path d="M760.8 576.0999999999999 L764.2 579.5 M764.2 576.0999999999999 L760.8 579.5" stroke="#fff" stroke-width="1.5"/><path d="M778.6 570.8 L788 580 M788 570.8 L778.6 580" stroke="#6E6E6E" stroke-width="2.4"/><rect x="781.9" y="574" width="2.8" height="2.8" fill="#D5EAF2" transform="rotate(45 783.3 575.4)"/><path d="M775.4 567.6 H781.8 L775.4 574Z M791.2 567.6 V574 L784.8 567.6Z M775.4 582.4 V576 L781.8 582.4Z M791.2 582.4 H784.8 L791.2 576Z" fill="#0E98E0"/><path d="M777 569.2 L779.6 571.8 M789.6 569.2 L787 571.8 M777 580.8 L779.6 578.2 M789.6 580.8 L787 578.2" stroke="#0E98E0" stroke-width="2.6"/></svg>
<div class="a " style="left:796px;top:588px;width:434px;height:220px;background:#fff;"></div>
<div class="a " style="left:798px;top:589px;width:431px;height:11px;background:#DEE1E6;"></div>
<div class="a " style="left:1077px;top:590px;width:9px;height:10px;background:#fff;border-radius:2px 2px 0 0;"></div>
<svg class="a" style="left:798px;top:589px" width="431" height="11" viewBox="798 589 431 11"><circle cx="805.0" cy="595.2" r="2.1" fill="#C2185B"/><path d="M809.4 593 V597.6" stroke="#9AA0A6" stroke-width=".6"/><path d="M813.92 592.9 L816.2199999999999 595.2 L813.92 597.5 L811.62 595.2Z" fill="#1A73E8"/><circle cx="813.92" cy="595.2" r=".7" fill="#fff"/><path d="M818.3199999999999 593 V597.6" stroke="#9AA0A6" stroke-width=".6"/><path d="M822.84 592.9 L825.14 595.2 L822.84 597.5 L820.5400000000001 595.2Z" fill="#1A73E8"/><circle cx="822.84" cy="595.2" r=".7" fill="#fff"/><path d="M827.24 593 V597.6" stroke="#9AA0A6" stroke-width=".6"/><circle cx="831.76" cy="595.2" r="2.1" fill="#5F6368"/><path d="M836.16 593 V597.6" stroke="#9AA0A6" stroke-width=".6"/><circle cx="840.68" cy="595.2" r="2.1" fill="#5F6368"/><path d="M845.0799999999999 593 V597.6" stroke="#9AA0A6" stroke-width=".6"/><circle cx="849.6" cy="595.2" r="2.1" fill="#5F6368"/><path d="M854.0 593 V597.6" stroke="#9AA0A6" stroke-width=".6"/><circle cx="858.52" cy="595.2" r="2.1" fill="#B98B5E"/><path d="M862.92 593 V597.6" stroke="#9AA0A6" stroke-width=".6"/><circle cx="867.44" cy="595.2" r="2.1" fill="#B98B5E"/><path d="M871.84 593 V597.6" stroke="#9AA0A6" stroke-width=".6"/><circle cx="876.36" cy="595.2" r="2.1" fill="#B98B5E"/><path d="M880.76 593 V597.6" stroke="#9AA0A6" stroke-width=".6"/><circle cx="885.28" cy="595.2" r="2.1" fill="#DB4437"/><path d="M889.68 593 V597.6" stroke="#9AA0A6" stroke-width=".6"/><circle cx="894.2" cy="595.2" r="2.1" fill="#5B8DB8"/><path d="M898.6 593 V597.6" stroke="#9AA0A6" stroke-width=".6"/><rect x="901.02" y="593.1" width="2" height="2" fill="#F25022"/><rect x="903.22" y="593.1" width="2" height="2" fill="#7FBA00"/><rect x="901.02" y="595.3" width="2" height="2" fill="#00A4EF"/><rect x="903.22" y="595.3" width="2" height="2" fill="#FFB900"/><path d="M907.52 593 V597.6" stroke="#9AA0A6" stroke-width=".6"/><circle cx="912.04" cy="595.2" r="1.9" fill="none" stroke="#111" stroke-width="1"/><path d="M916.4399999999999 593 V597.6" stroke="#9AA0A6" stroke-width=".6"/><circle cx="920.96" cy="595.2" r="2.1" fill="#3B78E7"/><path d="M925.36 593 V597.6" stroke="#9AA0A6" stroke-width=".6"/><path d="M929.88 592.9 L932.18 595.2 L929.88 597.5 L927.58 595.2Z" fill="#1A73E8"/><circle cx="929.88" cy="595.2" r=".7" fill="#fff"/><path d="M934.28 593 V597.6" stroke="#9AA0A6" stroke-width=".6"/><path d="M938.8 592.9 L941.0999999999999 595.2 L938.8 597.5 L936.5 595.2Z" fill="#1A73E8"/><circle cx="938.8" cy="595.2" r=".7" fill="#fff"/><path d="M943.1999999999999 593 V597.6" stroke="#9AA0A6" stroke-width=".6"/><path d="M947.72 592.9 L950.02 595.2 L947.72 597.5 L945.4200000000001 595.2Z" fill="#4A90E2"/><circle cx="947.72" cy="595.2" r=".7" fill="#fff"/><path d="M952.12 593 V597.6" stroke="#9AA0A6" stroke-width=".6"/><path d="M956.64 592.9 L958.9399999999999 595.2 L956.64 597.5 L954.34 595.2Z" fill="#1A73E8"/><circle cx="956.64" cy="595.2" r=".7" fill="#fff"/><path d="M961.04 593 V597.6" stroke="#9AA0A6" stroke-width=".6"/><circle cx="965.56" cy="595.2" r="1.9" fill="none" stroke="#111" stroke-width="1"/><path d="M969.9599999999999 593 V597.6" stroke="#9AA0A6" stroke-width=".6"/><circle cx="974.48" cy="595.2" r="1.9" fill="none" stroke="#111" stroke-width="1"/><path d="M978.88 593 V597.6" stroke="#9AA0A6" stroke-width=".6"/><circle cx="983.4" cy="595.2" r="1.9" fill="none" stroke="#111" stroke-width="1"/><path d="M987.8 593 V597.6" stroke="#9AA0A6" stroke-width=".6"/><rect x="990.2199999999999" y="593.1" width="2" height="2" fill="#F25022"/><rect x="992.42" y="593.1" width="2" height="2" fill="#7FBA00"/><rect x="990.2199999999999" y="595.3" width="2" height="2" fill="#00A4EF"/><rect x="992.42" y="595.3" width="2" height="2" fill="#FFB900"/><path d="M996.7199999999999 593 V597.6" stroke="#9AA0A6" stroke-width=".6"/><path d="M1001.24 592.9 L1003.54 595.2 L1001.24 597.5 L998.94 595.2Z" fill="#4A90E2"/><circle cx="1001.24" cy="595.2" r=".7" fill="#fff"/><path d="M1005.64 593 V597.6" stroke="#9AA0A6" stroke-width=".6"/><circle cx="1010.16" cy="595.2" r="1.9" fill="none" stroke="#111" stroke-width="1"/><path d="M1014.56 593 V597.6" stroke="#9AA0A6" stroke-width=".6"/><circle cx="1019.0799999999999" cy="595.2" r="1.9" fill="none" stroke="#111" stroke-width="1"/><path d="M1023.4799999999999 593 V597.6" stroke="#9AA0A6" stroke-width=".6"/><circle cx="1028.0" cy="595.2" r="1.9" fill="none" stroke="#111" stroke-width="1"/><path d="M1032.4 593 V597.6" stroke="#9AA0A6" stroke-width=".6"/><circle cx="1036.92" cy="595.2" r="1.8" fill="#fff" stroke="#EA9A3A" stroke-width=".9"/><path d="M1036.92 595.2 h1.9" stroke="#4285F4" stroke-width=".9"/><path d="M1041.3200000000002 593 V597.6" stroke="#9AA0A6" stroke-width=".6"/><circle cx="1045.84" cy="595.2" r="2.1" fill="#E8A33D"/><path d="M1050.24 593 V597.6" stroke="#9AA0A6" stroke-width=".6"/><rect x="1052.66" y="593.1" width="2" height="2" fill="#F25022"/><rect x="1054.86" y="593.1" width="2" height="2" fill="#7FBA00"/><rect x="1052.66" y="595.3" width="2" height="2" fill="#00A4EF"/><rect x="1054.86" y="595.3" width="2" height="2" fill="#FFB900"/><path d="M1059.16 593 V597.6" stroke="#9AA0A6" stroke-width=".6"/><circle cx="1063.68" cy="595.2" r="1.9" fill="none" stroke="#111" stroke-width="1"/><path d="M1068.0800000000002 593 V597.6" stroke="#9AA0A6" stroke-width=".6"/><path d="M1072.6 592.9 L1074.8999999999999 595.2 L1072.6 597.5 L1070.3 595.2Z" fill="#1A73E8"/><circle cx="1072.6" cy="595.2" r=".7" fill="#fff"/><path d="M1080.52 593.9000000000001L1083.12 596.5M1083.12 593.9000000000001L1080.52 596.5" stroke="#333" stroke-width="0.7" fill="none"/><circle cx="1090.44" cy="595.2" r="2.1" fill="#5F6368"/><path d="M1094.8400000000001 593 V597.6" stroke="#9AA0A6" stroke-width=".6"/><circle cx="1099.3600000000001" cy="595.2" r="1.8" fill="#fff" stroke="#EA9A3A" stroke-width=".9"/><path d="M1099.3600000000001 595.2 h1.9" stroke="#4285F4" stroke-width=".9"/><path d="M1103.7600000000002 593 V597.6" stroke="#9AA0A6" stroke-width=".6"/><circle cx="1108.28" cy="595.2" r="2.1" fill="#1B4F9C"/><path d="M1112.68 593 V597.6" stroke="#9AA0A6" stroke-width=".6"/><path d="M1117.2 592.9 L1119.5 595.2 L1117.2 597.5 L1114.9 595.2Z" fill="#1A73E8"/><circle cx="1117.2" cy="595.2" r=".7" fill="#fff"/><path d="M1121.6000000000001 593 V597.6" stroke="#9AA0A6" stroke-width=".6"/><rect x="1123.9199999999998" y="593" width="4.4" height="4.4" fill="#12808A"/><rect x="1125.12" y="594.2" width="2" height="2" fill="#0B3F45"/><path d="M1130.52 593 V597.6" stroke="#9AA0A6" stroke-width=".6"/><circle cx="1135.04" cy="595.2" r="1.8" fill="#fff" stroke="#EA9A3A" stroke-width=".9"/><path d="M1135.04 595.2 h1.9" stroke="#4285F4" stroke-width=".9"/><path d="M1139.44 593 V597.6" stroke="#9AA0A6" stroke-width=".6"/><circle cx="1143.96" cy="595.2" r="1.8" fill="#fff" stroke="#D9432F" stroke-width="1"/><path d="M1148.3600000000001 593 V597.6" stroke="#9AA0A6" stroke-width=".6"/><circle cx="1152.88" cy="595.2" r="2.1" fill="#6FB4F0"/><path d="M1157.2800000000002 593 V597.6" stroke="#9AA0A6" stroke-width=".6"/><circle cx="1161.8" cy="595.2" r="2.1" fill="#1A4FD6"/><path d="M1166.2 593 V597.6" stroke="#9AA0A6" stroke-width=".6"/><path d="M1169.6 595.4 H1173.4 M1171.5 593.5 V597.3" stroke="#333" stroke-width=".8"/><path d="M1194.6 592.6 H1197.4" stroke="#333" stroke-width=".7"/><rect x="1207.4" y="590.6" width="2.2" height="3" fill="none" stroke="#333" stroke-width=".7"/><path d="M1220.0 590.9L1222.8000000000002 593.6999999999999M1222.8000000000002 590.9L1220.0 593.6999999999999" stroke="#333" stroke-width="0.7" fill="none"/></svg>
<div class="a " style="left:798px;top:600px;width:431px;height:10px;background:#fff;"></div>
<div class="a " style="left:829px;top:601px;width:342px;height:8px;background:#F1F3F4;border-radius:4px;"></div>
<svg class="a" style="left:798px;top:600px" width="431" height="10" viewBox="798 600 431 10"><path d="M803 605.2 H806 M804.4 603.8 L803 605.2 L804.4 606.6" fill="none" stroke="#5F6368" stroke-width=".8"/><path d="M812 605.2 H815 M813.6 603.8 L815 605.2 L813.6 606.6" fill="none" stroke="#C0C4C9" stroke-width=".8"/><circle cx="822.2" cy="605.2" r="1.6" fill="none" stroke="#333" stroke-width=".9"/><rect x="822.6" y="602.8" width="1.8" height="1.6" fill="#fff"/><circle cx="833.2" cy="605.1" r="1.7" fill="none" stroke="#5F6368" stroke-width=".7"/><path d="M858.4 603 V607.4" stroke="#9AA0A6" stroke-width=".5"/><path d="M1166 603.2 l.7 1.4 1.5.2 -1.1 1 .3 1.5 -1.4-.8 -1.4.8 .3-1.5 -1.1-1 1.5-.2Z" fill="none" stroke="#5F6368" stroke-width=".6"/><rect x="1174" y="602.8" width="4.2" height="4.4" fill="#3B78E7"/><rect x="1182.4" y="605" width="7" height="3.2" rx="1" fill="#E8365D"/><path d="M1183.4 605 Q1186 600.6 1188.4 605" fill="none" stroke="#E8365D" stroke-width=".8"/><rect x="1192.6" y="602.6" width="4.6" height="4.6" rx=".8" fill="#17A6A8"/><path d="M1201.6 603 h3.6 v1.2 h1 v3 h-4.6Z" fill="#222"/><circle cx="1212.6" cy="605" r="2.6" fill="#6B5B4B" stroke="#222" stroke-width=".6"/><circle cx="1221.6" cy="603.2" r=".5" fill="#444"/><circle cx="1221.6" cy="605" r=".5" fill="#444"/><circle cx="1221.6" cy="606.8" r=".5" fill="#444"/></svg>
<span class="t" style="left:837.5px;top:604px;font-size:4px;color:#6B7075;transform:scaleX(0.9565);">Not secure</span>
<span class="t" style="left:860.5px;top:604px;font-size:4px;color:#6B7075;transform:scaleX(0.9738);">services.smartbear.com/samples/TestComplete14/smartstore/</span>
<div class="a " style="left:798px;top:610px;width:431px;height:9px;background:#fff;"></div>
<svg class="a" style="left:798px;top:610px" width="431" height="9" viewBox="798 610 431 9"><rect x="801.8" y="612" width="1.8" height="1.8" fill="#EA4335"/><rect x="804.0" y="612" width="1.8" height="1.8" fill="#FBBC05"/><rect x="801.8" y="614.2" width="1.8" height="1.8" fill="#34A853"/><rect x="804.0" y="614.2" width="1.8" height="1.8" fill="#4285F4"/><path d="M822.8 611.8 L825.0 614 L822.8 616.2 L820.5999999999999 614Z" fill="#1A73E8"/><circle cx="866" cy="614" r="1.8" fill="none" stroke="#222" stroke-width="1"/><rect x="882.8" y="612" width="3.2" height="4" fill="#F9D56E"/><path d="M905.6 612 L909.6 616 L906.6 615.4Z" fill="#C2185B"/><circle cx="908.4" cy="615" r="1.1" fill="#E8710A"/><rect x="948.8" y="612" width="3.2" height="4" fill="#F9D56E"/><rect x="964.4" y="612" width="3.2" height="4" fill="#F9D56E"/><rect x="983.4" y="612" width="3.2" height="4" fill="#F9D56E"/><path d="M1001 611.8 L1003.2 614 L1001 616.2 L998.8 614Z" fill="#1A73E8"/><rect x="1030.0" y="612" width="3.2" height="4" fill="#F9D56E"/><rect x="1051.4" y="612" width="3.2" height="4" fill="#F9D56E"/></svg>
<span class="t" style="left:808.5px;top:613px;font-size:4px;color:#555;transform:scaleX(0.7678);">Apps</span>
<span class="t" style="left:826.5px;top:613px;font-size:4px;color:#555;transform:scaleX(0.8300);">System Dashboard...</span>
<span class="t" style="left:869.5px;top:613px;font-size:4px;color:#555;transform:scaleX(0.8782);">HRM</span>
<span class="t" style="left:888.5px;top:613px;font-size:4px;color:#555;transform:scaleX(0.8435);">Chrome</span>
<span class="t" style="left:911.5px;top:613px;font-size:4px;color:#555;transform:scaleX(0.8130);">Test Host Occupati...</span>
<span class="t" style="left:954.5px;top:613px;font-size:4px;color:#555;transform:scaleX(0.7826);">Git</span>
<span class="t" style="left:970.5px;top:613px;font-size:4px;color:#555;transform:scaleX(0.7497);">Tools</span>
<span class="t" style="left:989.5px;top:613px;font-size:4px;color:#555;transform:scaleX(0.6845);">inv</span>
<span class="t" style="left:1004.5px;top:613px;font-size:4px;color:#555;transform:scaleX(0.8735);">QAComplete</span>
<span class="t" style="left:1036.5px;top:613px;font-size:4px;color:#555;transform:scaleX(0.8179);">Winapi</span>
<span class="t" style="left:1057.5px;top:613px;font-size:4px;color:#555;transform:scaleX(0.7494);">Edge</span>
<div class="a " style="left:798px;top:619px;width:431px;height:1px;background:#E4E6E9;"></div>
<div class="a " style="left:798px;top:620px;width:425px;height:172px;background:#fff;"></div>
<div class="a " style="left:798px;top:631px;width:425px;height:1px;background:#EEEEEE;"></div>
<span class="t" style="left:858.5px;top:624px;font-size:4px;color:#777;transform:scaleX(0.8012);">USD  DE</span>
<span class="t" style="left:1028.5px;top:624px;font-size:4px;color:#777;transform:scaleX(0.7725);">CONTACT US</span>
<span class="t" style="left:1053.5px;top:624px;font-size:4px;color:#777;transform:scaleX(0.7481);">HELP &amp; SERVICES</span>
<span class="t" style="left:1094.5px;top:624px;font-size:4px;color:#111;transform:scaleX(0.7666);">NEWS</span>
<span class="t" style="left:1108.7px;top:624px;font-size:4px;color:#111;transform:scaleX(0.7917);">BLOG</span>
<span class="t" style="left:1122.4px;top:624px;font-size:4px;color:#111;transform:scaleX(0.7905);">FORUMS</span>
<span class="t" style="left:1151.5px;top:624px;font-size:4px;color:#808080;transform:scaleX(0.7892);">LOG IN</span>
<svg class="a" style="left:798px;top:620px" width="425" height="12" viewBox="798 620 425 12"><path d="M873.8 625.2 l.8.8 .8-.8 M1082.8 625.2 l.8.8 .8-.8" fill="none" stroke="#777" stroke-width=".5"/><circle cx="1147.8" cy="624.6" r=".9" fill="#AAA"/><rect x="1146.4" y="625.8" width="2.8" height="1.4" fill="#AAA"/></svg>
<svg class="a" style="left:855px;top:634px" width="315" height="20" viewBox="855 634 315 20"><circle cx="864" cy="643.8" r="6.7" fill="#F6B21B"/><circle cx="864" cy="643.4" r="5.4" fill="#FFD34D" opacity=".55"/><path d="M859.6 643.6 H868.4 L867.4 648 H860.6Z M861 643.4 L862.6 640.8 M867 643.4 L865.4 640.8 M864 640.2 V643.4" fill="#2B2118" stroke="#2B2118" stroke-width=".9"/><path d="M860.2 649 H867.8" stroke="#2B2118" stroke-width="1"/><rect x="928.6" y="638.9" width="149.8" height="10.4" fill="#fff" stroke="#E8111A" stroke-width="1.3"/><rect x="1067.3" y="639.5" width="10.5" height="9.2" fill="#3548B4"/><circle cx="1072.2" cy="643.6" r="1.9" fill="none" stroke="#fff" stroke-width=".8"/><path d="M1073.6 645 L1075.4 646.8" stroke="#fff" stroke-width=".9"/><rect x="1086.6" y="641" width="6" height="5" rx=".6" fill="none" stroke="#444" stroke-width=".8"/><path d="M1092 640 v2 M1087.4 647 v1" stroke="#444" stroke-width=".7"/><path d="M1119.6 647.4 Q1114.6 643.8 1116.2 641.4 Q1118 639.8 1119.6 641.8 Q1121.2 639.8 1123 641.4 Q1124.6 643.8 1119.6 647.4Z" fill="none" stroke="#444" stroke-width=".8"/><path d="M1140.6 641.2 H1145.4 V647 L1143 645.6 L1140.6 647Z M1141.8 641 V639.8 H1144.2 V641" fill="none" stroke="#444" stroke-width=".8"/></svg>
<span class="t" style="left:873.5px;top:642px;font-size:6px;font-weight:bold;color:#1E1E1E;transform:scaleX(0.9171);">MY-SMARTSTORE</span>
<span class="t" style="left:896.3px;top:647px;font-size:4px;font-weight:bold;color:#1E1E1E;transform:scaleX(0.8222);">buy with a smile</span>
<span class="t" style="left:931.5px;top:643px;font-size:4px;color:#9AA6C8;transform:scaleX(0.9873);">What are you looking for?</span>
<span class="t" style="left:1095.5px;top:640px;font-size:4px;color:#BBB;transform:scaleX(0.7903);">Compare</span>
<span class="t" style="left:1095.5px;top:644px;font-size:4px;font-weight:bold;color:#222;transform:scaleX(0.8076);">Products</span>
<span class="t" style="left:1125.5px;top:640px;font-size:4px;color:#BBB;transform:scaleX(0.7425);">Wish</span>
<span class="t" style="left:1125.5px;top:644px;font-size:4px;font-weight:bold;color:#222;transform:scaleX(0.7594);">List</span>
<span class="t" style="left:1148.5px;top:640px;font-size:4px;color:#BBB;transform:scaleX(0.8401);">Shopping</span>
<span class="t" style="left:1148.5px;top:644px;font-size:4px;font-weight:bold;color:#222;transform:scaleX(0.8248);">Cart</span>
<div class="a " style="left:798px;top:657px;width:425px;height:17px;background:#F5F5F7;"></div>
<span class="t" style="left:858.4px;top:663px;font-size:5px;color:#333;transform:scaleX(0.9139);">Books</span>
<span class="t" style="left:880.5px;top:663px;font-size:5px;color:#333;transform:scaleX(0.9247);">Furniture</span>
<span class="t" style="left:904.5px;top:663px;font-size:5px;color:#333;transform:scaleX(0.9327);">Mobile phone</span>
<span class="t" style="left:938.0px;top:663px;font-size:5px;color:#333;transform:scaleX(0.9343);">Sports</span>
<span class="t" style="left:961.5px;top:663px;font-size:5px;color:#333;transform:scaleX(0.8995);">Fashion</span>
<span class="t" style="left:986.5px;top:663px;font-size:5px;color:#333;transform:scaleX(0.9082);">Gaming</span>
<span class="t" style="left:1009.9px;top:663px;font-size:5px;color:#333;transform:scaleX(0.7579);">Watches</span>
<span class="t" style="left:1030.1px;top:663px;font-size:5px;color:#333;transform:scaleX(0.8976);">Gift Cards</span>
<svg class="a" style="left:798px;top:657px" width="425" height="17" viewBox="798 657 425 17"><path d="M873.4 665.2 l.9.9 .9-.9 M953.8 665.2 l.9.9 .9-.9 M979.6 665.2 l.9.9 .9-.9" fill="none" stroke="#555" stroke-width=".55"/><rect x="972.8" y="658.4" width="10.6" height="4.4" fill="#3DBE5A"/><rect x="1021" y="658.4" width="5.6" height="4.4" fill="#E53B2C"/><path d="M1022.6 659.6 l2.2 2" stroke="#fff" stroke-width=".7"/></svg>
<span class="t" style="left:974.1px;top:659px;font-size:4px;font-weight:bold;color:#E8F8EC;transform:scaleX(0.6749);">SALE</span>
<span class="t" style="left:855.9px;top:682px;font-size:9px;color:#333;transform:scaleX(0.9934);">Welcome to our store</span>
<div class="a " style="left:856px;top:696px;width:309px;height:1px;background:#E8E8E8;"></div>
<span class="t" style="left:855.9px;top:704px;font-size:4.5px;color:#888;transform:scaleX(0.9325);">Online shopping is the process consumers go through to purchase products or services over the Internet. You can edit this in the admin site.</span>
<div class="a" style="left:856.0px;top:719px;width:48px;height:57px;box-sizing:border-box;border:1px solid #EAEAEA;background:#fff"></div>
<div class="a" style="left:856.0px;top:780px;width:48px;height:12px;box-sizing:border-box;border:1px solid #EAEAEA;border-bottom:0;background:#fff"></div>
<div class="a" style="left:908.0px;top:719px;width:48px;height:57px;box-sizing:border-box;border:1px solid #EAEAEA;background:#fff"></div>
<div class="a" style="left:908.0px;top:780px;width:48px;height:12px;box-sizing:border-box;border:1px solid #EAEAEA;border-bottom:0;background:#fff"></div>
<div class="a" style="left:960.0px;top:719px;width:48px;height:57px;box-sizing:border-box;border:1px solid #EAEAEA;background:#fff"></div>
<div class="a" style="left:960.0px;top:780px;width:48px;height:12px;box-sizing:border-box;border:1px solid #EAEAEA;border-bottom:0;background:#fff"></div>
<div class="a" style="left:1012.0px;top:719px;width:48px;height:57px;box-sizing:border-box;border:1px solid #EAEAEA;background:#fff"></div>
<div class="a" style="left:1012.0px;top:780px;width:48px;height:12px;box-sizing:border-box;border:1px solid #EAEAEA;border-bottom:0;background:#fff"></div>
<div class="a" style="left:1065.0px;top:719px;width:48px;height:57px;box-sizing:border-box;border:1px solid #EAEAEA;background:#fff"></div>
<div class="a" style="left:1065.0px;top:780px;width:48px;height:12px;box-sizing:border-box;border:1px solid #EAEAEA;border-bottom:0;background:#fff"></div>
<div class="a" style="left:1117.0px;top:719px;width:48px;height:57px;box-sizing:border-box;border:1px solid #EAEAEA;background:#fff"></div>
<span class="t" style="left:867.1px;top:768px;font-size:4.5px;color:#2A2A2A;transform:scaleX(0.9031);">Mobile phone</span>
<span class="t" style="left:926.3px;top:768px;font-size:4.5px;color:#2A2A2A;transform:scaleX(0.8612);">Sports</span>
<span class="t" style="left:975.9px;top:768px;font-size:4.5px;color:#2A2A2A;transform:scaleX(0.8886);">Furniture</span>
<span class="t" style="left:1026.5px;top:768px;font-size:4.5px;color:#2A2A2A;transform:scaleX(0.8339);">Sunglasses</span>
<span class="t" style="left:1082.5px;top:768px;font-size:4.5px;color:#2A2A2A;transform:scaleX(0.8568);">Soccer</span>
<span class="t" style="left:1131.5px;top:768px;font-size:4.5px;color:#2A2A2A;transform:scaleX(0.8670);">Basketball</span>
<svg class="a" style="left:856px;top:720px" width="310" height="73" viewBox="856 720 310 73"><rect x="873.8" y="725" width="11" height="33" rx="2.2" fill="#1B1B1B"/><ellipse cx="879.3" cy="732.4" rx="3.9" ry="5" fill="#B9B9B9"/><ellipse cx="879.3" cy="731.4" rx="2.8" ry="3.4" fill="#D4D4D4"/><rect x="875.6" y="738.6" width="7.4" height="5" rx="2.2" fill="#C4C4C4"/><rect x="875" y="747" width="8.6" height="9.6" rx="1" fill="#5A5A5A"/><path d="M875.4 749.6 H883.2 M875.4 752 H883.2 M875.4 754.4 H883.2 M877.8 747.4 V756.4 M880.6 747.4 V756.4" stroke="#C8C8C8" stroke-width=".6"/><path d="M920 732 Q924 728 930.4 729.6 Q932.6 738 934.4 746 Q935.6 755 929.6 758.6 Q925.6 756 924.4 748 Q919.4 740 920 732Z" fill="#4F77AE"/><path d="M932 729 Q938 727.6 942.4 730.4 Q945 737 943 744 Q942.8 754 938.4 757.4 Q934.6 756 934.4 747 Q933 738 932 729Z" fill="#1F3F6E"/><path d="M921 734 Q926 738 925 746 Q927 754 930 757" fill="none" stroke="#86A6D2" stroke-width="1.3"/><path d="M931.6 738 Q934.6 744 932.8 750" fill="none" stroke="#E9EEF5" stroke-width="1.4"/><path d="M922 733 l2 2 m-1 1 l2 2" stroke="#DDE6F2" stroke-width=".7"/><ellipse cx="985.6" cy="760" rx="8.6" ry="1.6" fill="#A9ADA6"/><rect x="984.6" y="755" width="2.2" height="5" fill="#B8BCB6"/><ellipse cx="985" cy="741" rx="16" ry="16.2" fill="#E9E7E2"/><path d="M994 728 Q1003 738 998.6 750 Q992 759 982 757 Q996 752 994 728Z" fill="#C9C7C1"/><ellipse cx="980.4" cy="739.4" rx="11.6" ry="13.4" transform="rotate(-18 980.4 739.4)" fill="#D2570F"/><ellipse cx="978.6" cy="736.4" rx="8.6" ry="9.6" transform="rotate(-18 978.6 736.4)" fill="#B5420A"/><path d="M970.4 746.6 Q978 743.6 988.4 745.6 Q986 752.6 977.4 752.6 Q972 751 970.4 746.6Z" fill="#EE7A17"/><path d="M1025.6 731.6 Q1025.4 729.6 1028 729.6 L1038 730.4 Q1040 733 1042 730.4 L1051.6 729.8 Q1054 730 1053.6 733 L1053.4 741.6 L1025.8 741Z" fill="#B9805C"/><path d="M1027 731 Q1039 735 1052.6 731" fill="none" stroke="#D9A684" stroke-width=".8"/><path d="M1017.4 741.4 L1054.6 741.8 L1056 744.6 L1055.6 749.4 L1027.6 757.2 L1019 750Z" fill="#20242B"/><path d="M1019 744 L1028 751 L1055.6 744.8" fill="none" stroke="#3A3F48" stroke-width=".7"/><path d="M1017.2 740.2 Q1021 738.4 1028.4 739.2 Q1030.4 739.6 1032.6 739.2 Q1040 737.8 1044.6 740 Q1044 745.6 1038.4 746 Q1033.6 745.6 1032 741.6 Q1030.6 741 1029.4 741.8 Q1028 746.6 1023 746.2 Q1018 745.4 1017.2 740.2Z" fill="#3C4754"/><path d="M1019.4 741 Q1023.4 739.6 1027.6 741 Q1026.6 744.8 1023 744.8 Q1020 744.4 1019.4 741Z M1034 741 Q1038.6 739.2 1042.8 741 Q1042 744.4 1038.2 744.6 Q1035 744.2 1034 741Z" fill="#8C99AB"/><ellipse cx="1087" cy="758.4" rx="14" ry="2.4" fill="#E4E4E4"/><circle cx="1089.1" cy="742.3" r="18.2" fill="#F4F4F4"/><circle cx="1089.1" cy="742.3" r="18.2" fill="none" stroke="#C9C9C9" stroke-width=".8"/><path d="M1104 750 Q1100 758 1092 760.4 Q1102 756 1104 750Z" fill="#D8D8D8"/><path d="M1075.6 735 L1081.6 733.4 L1084.4 738.4 L1081.6 744.8 L1075.4 743.6 L1074 739Z" fill="#141414"/><path d="M1088.4 725 Q1094 723.6 1098.4 726.4 L1097 730 L1091 729.6Z" fill="#141414"/><path d="M1094.4 740.6 L1099.6 738.6 L1103.2 743.4 L1101.6 750.4 L1095.6 751.6 L1092.8 746Z" fill="#141414"/><path d="M1079.4 754.6 L1083.4 752.8 L1089 755.6 L1088.6 759.6 Q1083 759.6 1079.4 754.6Z" fill="#141414"/><path d="M1106.2 737 Q1107.6 740.6 1107 743.6 L1105.6 741Z" fill="#141414"/><path d="M1071.2 744 L1072.4 747.6 L1071.4 748Z" fill="#141414"/><circle cx="1141" cy="743" r="17.2" fill="#C4531F"/><circle cx="1136.6" cy="737.6" r="10" fill="#D86A33" opacity=".55"/><path d="M1135.8 726.6 Q1129 742 1137.4 759.6 M1124.4 739 Q1142 743.4 1155.6 732.8 M1124 747.4 Q1141 749.6 1158 745 M1129.6 754 Q1143 755.6 1152.6 756.4" fill="none" stroke="#3B1B0E" stroke-width=".9"/><rect x="860.6" y="791" width="38.6" height="1.2" fill="#D0D0D0"/><rect x="973.6" y="790.6" width="4.4" height="1.6" fill="#222"/><rect x="989.6" y="790.6" width="4.4" height="1.6" fill="#222"/><path d="M1029.4 792.2 Q1030 789.6 1033 789.4 L1043 789.4 Q1046 789.6 1046.6 792.2Z" fill="#7A3E22"/></svg>
<div class="a " style="left:1223px;top:620px;width:6px;height:172px;background:#F1F1F1;"></div>
<div class="a " style="left:1224px;top:624px;width:4px;height:38px;background:#C1C1C1;"></div>
<svg class="a" style="left:1223px;top:620px" width="6" height="172" viewBox="1223 620 6 172"><path d="M1224.6 622 L1225.6 620.8 L1226.6 622Z M1224.6 789.4 L1225.6 790.6 L1226.6 789.4Z" fill="#505050"/></svg>
<div class="a " style="left:798px;top:792px;width:431px;height:15px;background:#fff;"></div>
<div class="a " style="left:798px;top:792px;width:431px;height:1px;background:#DADCE0;"></div>
<div class="a " style="left:862px;top:794px;width:1px;height:11px;background:#DADCE0;"></div>
<svg class="a" style="left:798px;top:793px" width="431" height="14" viewBox="798 793 431 14"><rect x="804.4" y="797.4" width="3.6" height="4.6" fill="#4E8AD8"/><rect x="805" y="799.6" width="2.4" height="1.6" fill="#7BC47B"/><path d="M854.2 800.2 L855.7 798.8 L857.2 800.2" fill="none" stroke="#555" stroke-width=".7"/><rect x="1196.5" y="794.8" width="20.8" height="8.6" rx="1" fill="#fff" stroke="#DADCE0" stroke-width=".7"/><path d="M1221.5 797.8000000000001L1224.3000000000002 800.6M1224.3000000000002 797.8000000000001L1221.5 800.6" stroke="#333" stroke-width="0.7" fill="none"/></svg>
<span class="t" style="left:811.5px;top:798px;font-size:4px;color:#444;transform:scaleX(0.8892);">k3e5qf131?f.exe</span>
<span class="t" style="left:1200.1px;top:798px;font-size:4px;font-weight:bold;color:#333;transform:scaleX(0.7766);">Show all</span>
<div class="a " style="left:797px;top:588px;width:433px;height:1px;background:#A8C8E4;"></div>
<div class="a " style="left:796px;top:588px;width:1px;height:220px;background:#9CA3B2;"></div>
<div class="a " style="left:797px;top:589px;width:1px;height:218px;background:#B9D3EC;"></div>
<div class="a " style="left:1228px;top:589px;width:1px;height:218px;background:#BFD8F2;"></div>
<div class="a " style="left:1229px;top:588px;width:1px;height:220px;background:#4F8CA6;"></div>
<div class="a " style="left:797px;top:806px;width:432px;height:1px;background:#BFD8F2;"></div>
<div class="a " style="left:796px;top:807px;width:434px;height:1px;background:#4A8AA0;"></div>
</body></html>
